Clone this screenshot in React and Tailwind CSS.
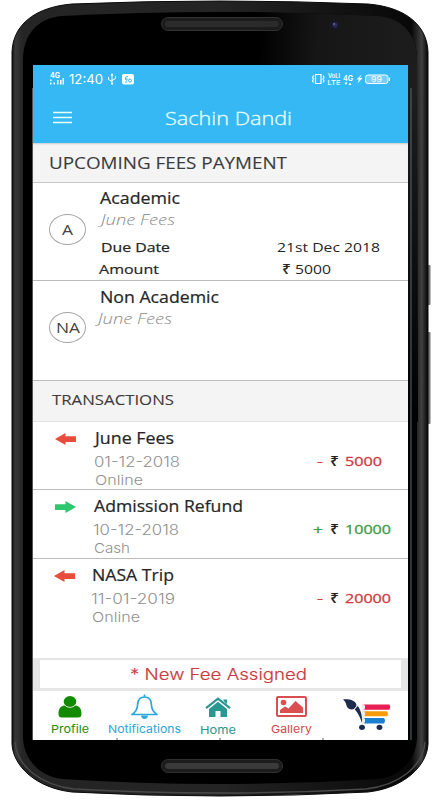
import React, { useLayoutEffect, useRef, useState } from 'react';
import { clsx } from 'clsx';

// Single line of text stretched horizontally to a given width
function Fit({ w, className, children }) {
    const ref = useRef(null);
    const [scale, setScale] = useState(1);

    useLayoutEffect(() => {
        if (ref.current?.offsetWidth) setScale(w / ref.current.getBoundingClientRect().width);
    }, []);

    return (
        <span className={clsx("block whitespace-nowrap", className)} style={{ width: w }}>
            <span ref={ref} className="inline-block origin-left" style={{ transform: `scaleX(${scale})` }}>
                {children}
            </span>
        </span>
    );
}

function PhoneBody() {
    return (
        <svg className="col-start-1 row-start-1" width="436" height="800" viewBox="0 0 436 800">
            <defs>
                <linearGradient id="rim" x1="0" x2="1" y1="0" y2="0">
                    <stop offset="0" stopColor="#111" />
                    <stop offset="0.008" stopColor="#383838" />
                    <stop offset="0.025" stopColor="#252525" />
                    <stop offset="0.5" stopColor="#242424" />
                    <stop offset="0.96" stopColor="#080808" />
                    <stop offset="0.985" stopColor="#404040" />
                    <stop offset="1" stopColor="#050505" />
                </linearGradient>
                <linearGradient id="glare" x1="0" x2="1" y1="0" y2="0.1">
                    <stop offset="0.2" stopColor="#000" />
                    <stop offset="0.5" stopColor="#161616" />
                    <stop offset="1" stopColor="#1d1d1d" />
                </linearGradient>
                <linearGradient id="fade" x1="0" x2="0" y1="0" y2="1">
                    <stop offset="0" stopColor="#000" stopOpacity="0" />
                    <stop offset="1" stopColor="#000" />
                </linearGradient>
            </defs>
            <rect x="426" y="265" width="4.500" height="40" rx="1" fill="#777" />
            <rect x="426" y="332" width="4.500" height="92" rx="1" fill="#777" />
            <path d="M12 52C13 24 36 7 72 4Q145 1 220 1T368 4C404 7 427 24 428 52V744C427 766 404 788 368 792Q295 796 220 796T72 792C36 788 13 766 12 744Z" fill="url(#rim)" stroke="#0a0a0a" strokeWidth="1" />
            <path d="M15 742C17 766 40 785 74 789Q146 793 220 793T366 789C400 785 423 766 425 742" fill="none" stroke="#4a4a4a" strokeWidth="1.500" />
            <path d="M23 60C23 34 38 18 62 16Q140 12 220 12T378 16C402 18 417 34 417 60V736C417 758 402 776 378 779Q300 784 220 784T62 779C38 776 23 758 23 736Z" fill="#000" />
            <path d="M220 12Q300 12 378 16C402 18 417 34 417 60V421H220Z" fill="url(#glare)" />
            <path d="M408 90H418V422H408Z" fill="url(#fade)" />
            <path d="M411 88V740" stroke="#5d666b" strokeWidth="1" />
            <path d="M32.500 88V740" stroke="#555" strokeWidth="1" />
            <rect x="161.500" y="17.500" width="121" height="13" rx="6.500" fill="#1c1c1c" stroke="#303030" />
            <rect x="165" y="21" width="114" height="6" rx="3" fill="#2b2b2b" />
            <rect x="161.500" y="759.500" width="121" height="13" rx="6.500" fill="#1c1c1c" stroke="#303030" />
            <rect x="165" y="763" width="114" height="6" rx="3" fill="#3a3a3a" />
            <circle cx="335" cy="25" r="5" fill="#17172a" />
            <circle cx="335" cy="25" r="2.500" fill="#2c2c55" />
            <circle cx="334" cy="24" r="0.900" fill="#6b6bb0" />
        </svg>
    );
}

function StatusBar() {
    return (
        <div className="flex h-7 items-center pl-4 text-white">
            <svg width="17" height="14" viewBox="0 0 17 14" fill="currentColor">
                <text x="1" y="6" fontSize="7" fontWeight="700" fontFamily="Inter, sans-serif" textLength="10" lengthAdjust="spacingAndGlyphs">4G</text>
                <path d="M1 7.500h1.500V9H1zM1 10.500h1.500v2H1zM4.500 10.500H6v2H4.500zM8 8h1.500v4.500H8zM11 8h1.500v4.500H11zM13.500 6H15v6.500h-1.500z" />
            </svg>
            <Fit w={34} className="ml-[3px] pt-px font-[Inter,sans-serif] text-[12.5px] leading-4">12:40</Fit>
            <svg className="ml-1" width="10" height="12" viewBox="0 0 10 12" fill="none" stroke="currentColor" strokeWidth="1">
                <path d="M5 2v8M5 8.500L1.500 6.500V4.500M5 7.500l3.500-2V3.500" />
                <path d="M5 0l1.500 2.500h-3zM4 10h2v1.500H4zM1 4h1v1H1zM8 3h1v1H8z" fill="currentColor" stroke="none" />
            </svg>
            <svg className="ml-[5px]" width="12" height="11" viewBox="0 0 12 11">
                <rect width="12" height="10.500" rx="2" fill="#fff" />
                <g fill="none" stroke="#35b8f3" strokeWidth="1">
                    <path d="M6 2.500a2 2 0 1 0 -1 4" />
                    <circle cx="8" cy="6.500" r="1.500" />
                    <path d="M4 5h2M3 8h2" />
                </g>
            </svg>
            <svg className="ml-[177px] mb-px" width="80" height="14" viewBox="0 0 80 14" fill="none" stroke="currentColor">
                <path d="M4.500 2.500h5.500v9h-5.500zM2.500 3.500l-1 2 1 1.500-1 2 1 1.500M12 3.500l1 2-1 1.500 1 2-1 1.500" strokeWidth="1.200" />
                <g fill="currentColor" stroke="none" fontFamily="Inter, sans-serif" fontWeight="600">
                    <text x="17" y="6" fontSize="5.500" textLength="12" lengthAdjust="spacingAndGlyphs">VoLI</text>
                    <text x="16.500" y="12.500" fontSize="6.500" fontWeight="500" textLength="13" lengthAdjust="spacingAndGlyphs">LTE</text>
                    <text x="32" y="9" fontSize="7.500" textLength="10" lengthAdjust="spacingAndGlyphs">4G</text>
                    <path d="M33.500 10.500h3L35 13zM37.500 13h3L39 10.500z" />
                    <path d="M50.500 2.500l-5 5h2.500l-1.500 4 5-5.500H49z" />
                </g>
                <rect x="54.500" y="3" width="22.500" height="8.500" rx="2.500" fill="#7ccdf6" />
                <path d="M78.500 5.500v3.500" />
                <text x="60" y="10" fontSize="7.500" fontFamily="Inter, sans-serif" fill="currentColor" stroke="none" textLength="11" lengthAdjust="spacingAndGlyphs">99</text>
            </svg>
        </div>
    );
}

function Avatar({ label, w }) {
    return (
        <div className="mt-[31px] ml-4 flex h-[31px] w-[37px] shrink-0 items-center justify-center rounded-[50%] border border-[#a5a5a5] text-[#444]">
            <Fit w={w} className="text-[14.5px] leading-5">{label}</Fit>
        </div>
    );
}

function SectionTitle({ w, className, children }) {
    return (
        <div className={clsx("bg-[#f4f4f4] text-[#3c3c3c] [-webkit-text-stroke:0.1px]", className)}>
            <Fit w={w}>{children}</Fit>
        </div>
    );
}

function Rupee({ className }) {
    return (
        <span className={clsx("font-['Noto_Sans',sans-serif] font-medium", className)}>
            <Fit w={9}>₹</Fit>
        </span>
    );
}

const transactions = [
    {
        title: 'June Fees', titleW: 79, date: '01-12-2018', dateW: 86, mode: 'Online', modeW: 48,
        sign: '-', amount: '5000', amountW: 37, indent: 'pl-[62px]', arrow: 'ml-[22px]',
    },
    {
        title: 'Admission Refund', titleW: 149, date: '10-12-2018', dateW: 86, mode: 'Cash', modeW: 36,
        sign: '+', amount: '10000', amountW: 46, indent: 'pl-[61px]', arrow: 'ml-[22px]',
    },
    {
        title: 'NASA Trip', titleW: 82, date: '11-01-2019', dateW: 84, mode: 'Online', modeW: 48,
        sign: '-', amount: '20000', amountW: 46, indent: 'pl-[59px]', arrow: 'ml-[21px]',
    },
];

function Transaction({ item, className }) {
    const credit = item.sign === '+';

    return (
        <div className={clsx("flex", className)}>
            <div className="w-0">
                <svg
                    className={clsx("mt-[11px] max-w-none", item.arrow, credit ? "text-[#2dc76d]" : "text-[#e74c3c]")}
                    width="21" height="12" viewBox="0 0 21 12" fill="currentColor"
                >
                    <path d={credit ? "M0 3.200h10.500V0L21 6 10.500 12V9H0z" : "M21 3.200H10.500V0L0 6l10.500 6V9H21z"} />
                </svg>
            </div>
            <div className={clsx("w-[279px] pt-1.5", item.indent)}>
                <Fit w={item.titleW} className="text-[15.5px] leading-5 text-[#262626] [-webkit-text-stroke:0.2px]">{item.title}</Fit>
                <div className="-ml-px pt-[5px] font-[Inter,sans-serif] text-[#909090]">
                    <Fit w={item.dateW} className="text-[14px] leading-[18px] font-light">{item.date}</Fit>
                    <Fit w={item.modeW} className="ml-px text-[13.5px] leading-[18px] font-light">{item.mode}</Fit>
                </div>
            </div>
            <div className={clsx("flex pt-[30px] text-[13.5px] leading-[18px] [-webkit-text-stroke:0.3px]", credit ? "text-[#3d9a46]" : "text-[#cf3a40]")}>
                <span className="flex w-[18px] justify-end pr-[7px]">
                    <Fit w={credit ? 10 : 6}>{item.sign}</Fit>
                </span>
                <Rupee className="w-[15px] text-[#222] [-webkit-text-stroke:0.1px]" />
                <Fit w={item.amountW}>{item.amount}</Fit>
            </div>
        </div>
    );
}

function BottomNav() {
    return (
        <nav className="relative flex h-[49px] bg-white font-[Inter,sans-serif] text-[11px] leading-4">
            <div className="flex w-[73px] flex-col items-center pt-[5px] text-[#1d8d0c]">
                <svg width="24" height="22" viewBox="0 0 24 22" fill="#128a00">
                    <ellipse cx="12" cy="5.500" rx="6.300" ry="5.400" />
                    <path d="M6.500 9.500Q12 14 17.500 9.500C22 10 23.500 13.500 23.500 18Q23.500 21.500 20 21.500H4Q.500 21.500 .500 18C.500 13.500 2 10 6.500 9.500z" />
                </svg>
                <Fit w={38} className="mt-[3px]">Profile</Fit>
            </div>
            <div className="flex w-[76px] flex-col items-center pt-[3px] text-[#2da5d6]">
                <svg width="27" height="25" viewBox="0 0 27 25" fill="none" stroke="#2ba9dc" strokeWidth="1.700">
                    <path d="M13.500 1v2M1 20.500h25C22 18 20.500 15 20.300 10C20 5.500 17.500 3 13.500 3S7 5.500 6.700 10C6.500 15 5 18 1 20.500z" strokeLinejoin="round" strokeLinecap="round" />
                    <path d="M10 21.500Q10.500 25 13.500 25T17 21.500z" fill="#2ba9dc" stroke="none" />
                </svg>
                <Fit w={73} className="mt-[2px]">Notifications</Fit>
            </div>
            <div className="flex w-[72px] flex-col items-center pt-[6px] text-[#2a9591]">
                <svg width="26" height="21" viewBox="0 0 26 21">
                    <path d="M13 4.800L22 12v8h-6.500v-6h-5v6H4v-8z" fill="#2a9793" />
                    <path d="M18.500 2.500H22V7l-3.500-3z" fill="#2a9793" />
                    <path d="M1 11.200L13 1.700l12 9.500" fill="none" stroke="#2a9793" strokeWidth="2.200" />
                </svg>
                <Fit w={36} className="mt-[4px]">Home</Fit>
            </div>
            <div className="flex w-[75px] flex-col items-center pt-[5px] text-[#d1474b]">
                <svg width="31" height="21" viewBox="0 0 31 21" fill="#dc4f50">
                    <rect x="1" y="1" width="29" height="19" rx="1" fill="none" stroke="#dc4f50" strokeWidth="2" />
                    <circle cx="7.500" cy="6.500" r="2.800" />
                    <path d="M4 17v-3l5-3.500 3.500 2L19.500 5 27 11.500V17z" />
                </svg>
                <Fit w={41} className="mt-[4px]">Gallery</Fit>
            </div>
            <svg className="mt-2 ml-3.5" width="48" height="32" viewBox="0 0 48 32">
                <path d="M0 .500C5 0 12 .500 13.500 6C12.500 11 8.500 11.500 5.500 9.500C2.500 7 4 3.500 0 .500z" fill="#1d2b4c" />
                <path d="M11.500 10L14.500 6.500C17.500 10.500 19.500 16 19 24C17 18 15 14 11.500 10z" fill="#1d2b4c" />
                <path d="M11 10.500L14.800 6.500" stroke="#fff" strokeWidth="1" />
                <path d="M21 5.500H46.500Q48 8 46.500 10.800H21Q23 8 21 5.500z" fill="#e91e55" />
                <path d="M21 12.200H44Q46 15 44 17.300H21Q23 15 21 12.200z" fill="#f79a0c" />
                <path d="M21 19H41Q43 21.500 41 24.500H21Q23 21.500 21 19z" fill="#1e80d0" />
                <path d="M20 5v20" stroke="#c9ccd4" strokeWidth="0.800" />
                <ellipse cx="19" cy="28.300" rx="2.900" ry="2.600" fill="#1d2b4c" />
                <ellipse cx="36.500" cy="28.300" rx="2.900" ry="2.600" fill="#1d2b4c" />
            </svg>
            <div className="absolute bottom-0 left-[83px] flex gap-[101px]">
                <i className="h-[2px] w-[2px] bg-[#aaa]" />
                <i className="h-[2px] w-[2px] bg-[#aaa]" />
                <i className="h-[2px] w-[2px] bg-[#aaa]" />
            </div>
        </nav>
    );
}

export default function App() {
    return (
        <div className="grid h-[800px] w-[436px] overflow-hidden bg-white font-['Open_Sans','Noto_Sans',sans-serif]">
            <PhoneBody />
            <div className="z-10 col-start-1 row-start-1 mt-[65px] ml-[33px] flex h-[675px] w-[375px] flex-col overflow-hidden bg-white">
                <header className="h-[78px] shrink-0 bg-[#35b8f3]">
                    <StatusBar />
                    <div className="flex items-start pt-[11px] pl-5">
                        <svg className="mt-[7px]" width="19" height="13" viewBox="0 0 19 13" stroke="#e8ffff" strokeWidth="1.700">
                            <path d="M0 1.500h19M0 6.500h19M0 11.500h19" />
                        </svg>
                        <Fit w={127} className="ml-[93px] text-[17.5px] leading-7 font-light text-[#e8ffff] [-webkit-text-stroke:0.3px]">Sachin Dandi</Fit>
                    </div>
                </header>

                <SectionTitle w={238} className="h-10 border-b border-[#c9c9c9] pt-2 pl-4 text-[16px] leading-6 shadow-[inset_0_2px_2px_-1px_#ccc]">
                    UPCOMING FEES PAYMENT
                </SectionTitle>

                <div className="flex h-[98px] border-b border-[#bbb]">
                    <Avatar label="A" w={11} />
                    <div className="flex-1 pt-[5px] pl-3.5 text-[#262626]">
                        <Fit w={80} className="text-[15.5px] leading-5 [-webkit-text-stroke:0.2px]">Academic</Fit>
                        <Fit w={74} className="mt-[2px] ml-px text-[14.5px] leading-5 font-light text-[#888] italic">June Fees</Fit>
                        <div className="mt-[7px] ml-px flex text-[13.5px] leading-5">
                            <Fit w={69} className="[-webkit-text-stroke:0.25px]">Due Date</Fit>
                            <Fit w={103} className="ml-[107px]">21st Dec 2018</Fit>
                        </div>
                        <div className="-ml-px mt-[2px] flex text-[13.5px] leading-5">
                            <Fit w={60} className="[-webkit-text-stroke:0.2px]">Amount</Fit>
                            <Rupee className="ml-[123px] w-[13px]" />
                            <Fit w={36}>5000</Fit>
                        </div>
                    </div>
                </div>

                <div className="flex h-[99px]">
                    <Avatar label="NA" w={24} />
                    <div className="pt-[6px] pl-3.5">
                        <Fit w={119} className="text-[15.5px] leading-5 text-[#262626] [-webkit-text-stroke:0.2px]">Non Academic</Fit>
                        <Fit w={74} className="mt-[2px] -ml-[2px] text-[14.5px] leading-5 font-light text-[#888] italic">June Fees</Fit>
                    </div>
                </div>

                <SectionTitle w={122} className="h-[42px] border-t border-b border-t-[#bbb] border-b-[#e2e2e2] pt-2 pl-[19px] text-[14.5px] leading-[22px]">
                    TRANSACTIONS
                </SectionTitle>

                <Transaction item={transactions[0]} className="h-[68px] border-b border-[#bbb]" />
                <Transaction item={transactions[1]} className="h-[69px] border-b border-[#bbb]" />
                <Transaction item={transactions[2]} className="h-[99px]" />

                <div className="h-[33px] bg-[#e6e6e6] px-[7px] pt-[2px] pb-[3px]">
                    <div className="h-full bg-white pl-[90px] font-[Inter,sans-serif] text-[16px] leading-[29px] font-light text-[#cb3a41] [-webkit-text-stroke:0.2px]">
                        <Fit w={177}>* New Fee Assigned</Fit>
                    </div>
                </div>

                <BottomNav />
            </div>
        </div>
    );
}
